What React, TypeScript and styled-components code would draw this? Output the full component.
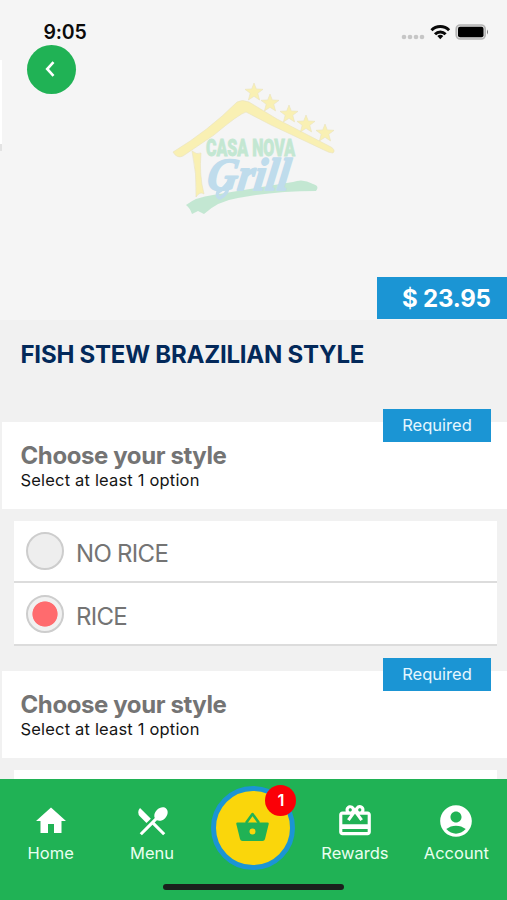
import React from "react";
import styled, { createGlobalStyle } from "styled-components";
import { MdAccountCircle, MdHome, MdRedeem, MdRestaurantMenu } from "react-icons/md";

const GREEN = "#20b255";
const BLUE = "#1b95d4";

const GlobalStyle = createGlobalStyle`
  *, *::before, *::after { box-sizing: border-box; }
  body { margin: 0; background: #f1f1f1; font-family: Inter, "Liberation Sans", sans-serif; }
  button { font: inherit; border: 0; padding: 0; }
`;

const Screen = styled.div`
  position: relative;
  display: flex;
  flex-direction: column;
  width: 507px;
  height: 900px;
  overflow: hidden;
  background: #f1f1f1;
`;

const Hero = styled.header`
  position: relative;
  display: flex;
  flex-direction: column;
  flex: none;
  height: 320px;
  background: #f5f5f5;
`;

const StatusBar = styled.div`
  display: flex;
  flex: none;
  justify-content: space-between;
  height: 44px;
  padding: 21px 18px 0 43.5px;
`;

const Clock = styled.span`
  font-size: 19.5px;
  line-height: 22px;
  font-weight: 600;
  letter-spacing: -0.2px;
  color: #0b0b0b;
`;

const StatusIcons = styled.svg`
  width: 90px;
  height: 22px;
  margin-top: 1px;
`;

const BackButton = styled.button`
  display: grid;
  place-items: center;
  flex: none;
  width: 49px;
  height: 49px;
  margin: 0.5px 0 0 26.5px;
  border-radius: 50%;
  background: ${GREEN};
`;

const EdgeCard = styled.div`
  position: absolute;
  left: 0;
  top: 60px;
  width: 2px;
  height: 91px;
  background: #fff;
  border-bottom: 7px solid #e3e3e3;
`;

const Logo = styled.svg`
  position: absolute;
  left: 160px;
  top: 70px;
`;

const Price = styled.div`
  width: 130px;
  height: 42px;
  margin: auto 0 1px auto;
  padding-left: 25px;
  background: ${BLUE};
  color: #fff;
  font-size: 24px;
  line-height: 44px;
  font-weight: 700;
  letter-spacing: -0.2px;
  white-space: nowrap;
`;

const Title = styled.h1`
  flex: none;
  height: 101.5px;
  margin: 0;
  padding: 18.5px 20.5px;
  font-size: 24px;
  line-height: 32px;
  font-weight: 700;
  letter-spacing: -0.22px;
  color: #03295a;
  white-space: nowrap;
`;

const Group = styled.section`
  flex: none;
  height: 249px;
`;

const GroupHeader = styled.div`
  position: relative;
  height: 87.5px;
  margin-left: 2px;
  padding: 19px 18.5px 0;
  background: #fff;
`;

const GroupTitle = styled.h2`
  margin: 0;
  font-size: 24px;
  line-height: 29px;
  font-weight: 700;
  letter-spacing: -0.4px;
  color: #747474;
`;

const Hint = styled.p`
  margin: 0;
  font-size: 16.5px;
  line-height: 20px;
  letter-spacing: 0.18px;
  color: #151515;
`;

const Required = styled.span`
  position: absolute;
  right: 16px;
  top: -12.2px;
  width: 108px;
  height: 33px;
  background: ${BLUE};
  color: #e5f7ff;
  font-size: 16.5px;
  line-height: 33px;
  text-align: center;
`;

const Options = styled.div`
  margin: 11.5px 10px 0 14px;
  background: #fff;
`;

const Option = styled.label`
  display: flex;
  align-items: center;
  gap: 12px;
  height: 62.8px;
  padding-left: 12px;
  border-bottom: 2px solid #dcdcdc;
`;

const Radio = styled.span<{ $checked: boolean }>`
  width: 38px;
  height: 38px;
  margin-top: 1px;
  border: 2.5px solid #cdcdcd;
  border-radius: 50%;
  background: ${(p) => (p.$checked ? "radial-gradient(circle, #ff6b6e 12.2px, #f1f1f1 13px)" : "#eeeeee")};
`;

const OptionName = styled.span`
  margin-top: 7px;
  font-size: 24px;
  line-height: 30px;
  color: #747474;
  letter-spacing: -0.7px;
`;

const TabBar = styled.nav`
  position: absolute;
  left: 0;
  bottom: 0;
  display: grid;
  grid-template-columns: repeat(5, 1fr);
  width: 100%;
  height: 121px;
  background: ${GREEN};
`;

const Tab = styled.a`
  display: flex;
  flex-direction: column;
  align-items: center;
  padding-top: 23px;
  color: #fff;
  font-size: 16.5px;
  line-height: 20px;
  svg { flex: none; height: 38px; margin-bottom: 3px; }
  span { color: #e9fff0; letter-spacing: 0; }
`;

const HomeIcon = styled(MdHome)`
  width: 36px;
`;

const Cart = styled.button`
  position: relative;
  display: grid;
  place-items: center;
  justify-self: center;
  width: 84px;
  height: 84px;
  margin-top: 7px;
  border: 5.5px solid ${BLUE};
  border-radius: 50%;
  background: #fad60b;
`;

const BasketIcon = styled.svg`
  width: 36px;
  height: 32px;
  margin-bottom: 5px;
`;

const Badge = styled.span`
  position: absolute;
  right: -6px;
  top: -6px;
  width: 31px;
  height: 31px;
  border-radius: 50%;
  background: #fb0007;
  color: #fff;
  font-size: 16.5px;
  line-height: 31px;
  font-weight: 600;
`;

const HomeIndicator = styled.div`
  position: absolute;
  left: 163px;
  bottom: 10px;
  width: 181px;
  height: 6px;
  border-radius: 3px;
  background: #1a211d;
`;

const STAR = "M0-9L2.3-3.1 9-2.7 3.8 1.3 5.6 8 0 4.3-5.6 8-3.8 1.3-9-2.7-2.3-3.1Z";
const STARS = [[94, 22], [110, 33], [129, 44], [146, 54], [165, 63]];

const BrandLogo = () => (
  <Logo width="190" height="160" viewBox="0 0 190 160" role="img" aria-label="Casa Nova Grill">
    <g fill="#f9f0b3" stroke="#e9e2bd" strokeWidth=".6">
      <path d="M13 82Q48 61 77 32Q82 29 89 32L117 49L171 77Q176 80 173 83Q169 83 164 80L111 55L86 42Q79 44 54 65L23 86Q17 89 13 82Z" />
      <path d="M32 81Q37 85 41 83Q39 105 44 124Q40 121 36 127Q37 104 32 81Z" />
      {STARS.map(([x, y]) => (
        <path key={x} d={STAR} transform={`translate(${x} ${y})`} />
      ))}
    </g>
    <path d="M26 135Q36 127 53 125Q95 118 133 112Q143 108 153 114Q160 116 156 121Q115 121 78 128Q58 131 44 144L38 141 32 144Q30 138 26 135Z" fill="#c3e7d2" />
    <text x="46" y="86" textLength="89" lengthAdjust="spacingAndGlyphs" fontFamily="Roboto" fontSize="24" fontWeight="900" fill="#c3e7d2" stroke="#c3e7d2" strokeWidth=".8">CASA NOVA</text>
    <text transform="translate(46 120) skewX(-8)" textLength="82" lengthAdjust="spacingAndGlyphs" fontFamily="Liberation Serif" fontSize="46" fontStyle="italic" fontWeight="700" fill="#bfdcec" stroke="#bfdcec" strokeWidth="1.8" strokeLinejoin="round">Grill</text>
    <path d="M69 111Q69 124 60 128Q56 127 58 122Q64 119 71 109" fill="none" stroke="#bfdcec" strokeWidth="3.5" />
  </Logo>
);

const OptionGroup = () => (
  <Group>
    <GroupHeader>
      <GroupTitle>Choose your style</GroupTitle>
      <Hint>Select at least 1 option</Hint>
      <Required>Required</Required>
    </GroupHeader>
    <Options>
      <Option><Radio $checked={false} /><OptionName>NO RICE</OptionName></Option>
      <Option><Radio $checked /><OptionName>RICE</OptionName></Option>
    </Options>
  </Group>
);

export default function App() {
  return (
    <Screen>
      <GlobalStyle />
      <Hero>
        <BrandLogo />
        <EdgeCard />
        <StatusBar>
          <Clock>9:05</Clock>
          <StatusIcons viewBox="0 0 90 22">
            <g fill="#c6c6c6">
              {[5, 11, 17, 23].map((x) => <circle key={x} cx={x} cy="15" r="2.3" />)}
            </g>
            <g fill="none" stroke="#080808" strokeWidth="3">
              <path d="M32.5 8.2a12.5 12.5 0 0 1 17.6 0M36 12.2a7.5 7.5 0 0 1 10.6 0" />
            </g>
            <path d="M41.3 17.2l-3-3.1a4.3 4.3 0 0 1 6 0z" fill="#080808" />
            <rect x="57.2" y="3" width="29" height="14" rx="4" fill="#ddd" stroke="#b4b4b4" strokeWidth="1.6" />
            <rect x="59" y="4.8" width="25.5" height="10.5" rx="2" fill="#000" />
            <path d="M88 7.5q2 2.5 0 5z" fill="#777" />
          </StatusIcons>
        </StatusBar>
        <BackButton aria-label="Back">
          <svg width="16" height="20" viewBox="0 0 16 20" fill="none" stroke="#fff" strokeWidth="2.6">
            <path d="M10.5 3.2 4.2 10l6.3 6.8" />
          </svg>
        </BackButton>
        <Price>$ 23.95</Price>
      </Hero>
      <Title>FISH STEW BRAZILIAN STYLE</Title>
      <OptionGroup />
      <OptionGroup />
      <TabBar>
        <Tab><HomeIcon /><span>Home</span></Tab>
        <Tab><MdRestaurantMenu size={37} /><span>Menu</span></Tab>
        <Cart aria-label="Basket">
          <BasketIcon viewBox="0 0 36 32">
            <path d="M11 13 17.5 4 24 13" fill="none" stroke={GREEN} strokeWidth="2.6" strokeLinejoin="round" />
            <path fill={GREEN} fillRule="evenodd" d="M2.5 12.5h30q1.5 0 1.2 1.5l-3.700 15q-.5 2-2.500 2h-20q-2 0-2.500-2L1.300 14q-.3-1.500 1.200-1.500ZM17.500 18.500a3 3 0 1 0 0 6 3 3 0 1 0 0-6Z" />
          </BasketIcon>
          <Badge>1</Badge>
        </Cart>
        <Tab><MdRedeem size={38} /><span>Rewards</span></Tab>
        <Tab><MdAccountCircle size={38} /><span>Account</span></Tab>
      </TabBar>
      <HomeIndicator />
    </Screen>
  );
}
